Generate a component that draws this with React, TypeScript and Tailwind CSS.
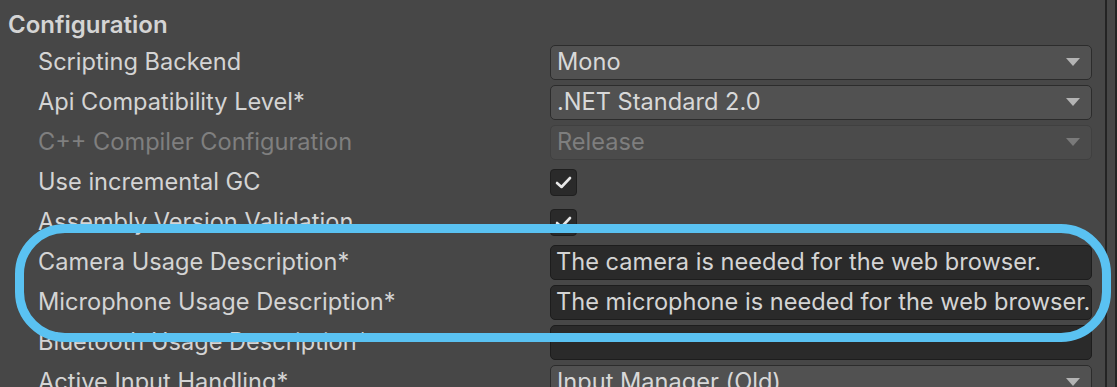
import React from "react";

type Row =
  | { label: string; kind: "dropdown"; value: string; disabled?: boolean }
  | { label: string; kind: "check" }
  | { label: string; kind: "text"; value: string };

const rows: Row[] = [
  { label: "Scripting Backend", kind: "dropdown", value: "Mono" },
  { label: "Api Compatibility Level*", kind: "dropdown", value: ".NET Standard 2.0" },
  { label: "C++ Compiler Configuration", kind: "dropdown", value: "Release", disabled: true },
  { label: "Use incremental GC", kind: "check" },
  { label: "Assembly Version Validation", kind: "check" },
  { label: "Camera Usage Description*", kind: "text", value: "The camera is needed for the web browser." },
  { label: "Microphone Usage Description*", kind: "text", value: "The microphone is needed for the web browser." },
  { label: "Bluetooth Usage Description*", kind: "text", value: "" },
  { label: "Active Input Handling*", kind: "dropdown", value: "Input Manager (Old)" },
];

const Arrow = ({ disabled }: { disabled?: boolean }) => (
  <svg width="14" height="8" viewBox="0 0 14 8" className="shrink-0">
    <path d="M0 0 L14 0 L7 8 Z" fill={disabled ? "#7a7a7a" : "#b4b4b4"} />
  </svg>
);

const Control = ({ row }: { row: Row }) => {
  if (row.kind === "check") {
    return (
      <div className="w-[27px] h-[27px] rounded-[4px] bg-[#2a2a2a] border border-[#1f1f1f] flex items-center justify-center">
        <svg width="17" height="13" viewBox="0 0 17 13">
          <path d="M2 7 L6.5 11 L15 2" fill="none" stroke="#e8e8e8" strokeWidth="2.6" strokeLinecap="round" strokeLinejoin="round" />
        </svg>
      </div>
    );
  }
  if (row.kind === "text") {
    return (
      <div className="w-[542px] h-[35px] rounded-[5px] bg-[#2a2a2a] border border-[#1d1d1d] flex items-center pl-[5px] text-[#d4d4d4] whitespace-nowrap overflow-hidden">
        {row.value}
      </div>
    );
  }
  return (
    <div
      className={
        row.disabled
          ? "w-[542px] h-[35px] rounded-[5px] bg-[#4b4b4b] border border-[#404040] flex items-center justify-between pl-[6px] pr-[11px] text-[#7e7e7e]"
          : "w-[542px] h-[35px] rounded-[5px] bg-[#515151] border border-[#2c2c2c] flex items-center justify-between pl-[6px] pr-[11px] text-[#d8d8d8]"
      }
    >
      <span className="whitespace-nowrap">{row.value}</span>
      <Arrow disabled={row.disabled} />
    </div>
  );
};

export default function App() {
  return (
    <div
      className="relative w-[1117px] h-[387px] overflow-hidden bg-[#474747] flex text-[23.6px]"
      style={{ fontFamily: "Inter, 'Noto Sans', sans-serif" }}
    >
      <div className="flex-1 flex flex-col">
        <div className="h-[42px] pt-[8px] pl-[8px] flex items-center font-semibold text-[24px] text-[#d4d4d4]">
          Configuration
        </div>
        {rows.map((row) => (
          <div key={row.label} className="h-[40px] shrink-0 flex items-center">
            <div
              className={
                row.kind === "dropdown" && row.disabled
                  ? "w-[550px] shrink-0 pl-[38px] whitespace-nowrap text-[#7f7f7f]"
                  : "w-[550px] shrink-0 pl-[38px] whitespace-nowrap text-[#d4d4d4]"
              }
            >
              {row.label}
            </div>
            <Control row={row} />
          </div>
        ))}
      </div>
      <div className="w-[2px] bg-[#242424]" />
      <div className="w-[8px] bg-[#474747]" />
      <div className="w-[2px] bg-[#242424]" />

      {/* annotation ring */}
      <div className="absolute left-[15px] top-[224px] w-[1096px] h-[118px] border-[9px] border-[#5ac2f2] rounded-[50px] pointer-events-none" />
    </div>
  );
}
